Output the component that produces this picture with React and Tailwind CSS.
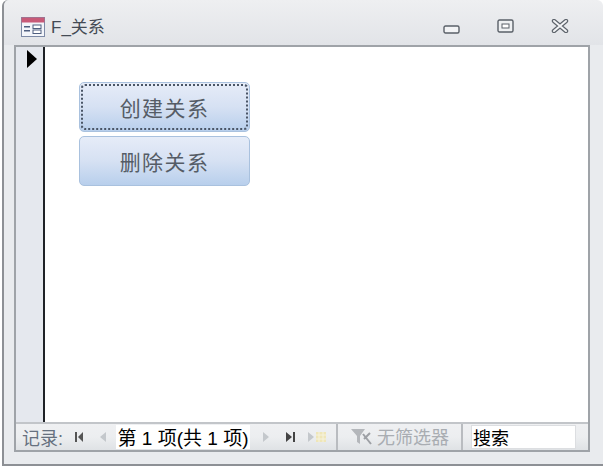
import React from "react";

const CJK = "font-['Liberation_Sans','Noto_Sans_CJK_SC',sans-serif]";

const Btn = ({ label, focused }) => (
  <div className="w-[171px] h-[50px] p-[1px] rounded-[5px] border border-[#a9c1de] bg-gradient-to-b from-[#e6ecf8] via-[#d6e1f3] to-[#b8cfec]">
    <div
      className={`h-full rounded-[4px] flex items-center justify-center pt-[3px] text-[21px] tracking-[1.4px] text-[#555c66] border-2 border-dotted ${
        focused ? "border-[#4a5566]" : "border-transparent"
      }`}
    >
      {label}
    </div>
  </div>
);

const First = () => (
  <svg width="11" height="10" viewBox="0 0 11 10" className="fill-[#555]">
    <rect x="1" y="0" width="2" height="10" />
    <path d="M9 0v10L4 5z" />
  </svg>
);
const Last = () => (
  <svg width="11" height="10" viewBox="0 0 11 10" className="fill-[#444]">
    <path d="M1 0v10l6-5z" />
    <rect x="8" y="0" width="2" height="10" />
  </svg>
);
const Tri = ({ left }) => (
  <svg width="8" height="10" viewBox="0 0 8 10" className="fill-[#c4c8cc]">
    <path d={left ? "M7 0v10L1 5z" : "M1 0v10l6-5z"} />
  </svg>
);

export default function App() {
  return (
    <div className={`w-[603px] h-[467px] bg-white flex flex-col overflow-hidden ${CJK}`}>
      <div className="w-[601px] h-[466px] ml-[2px] flex flex-col bg-[#e9ebee] border-l-2 border-b-2 border-[#8d9095] rounded-tl-[6px] rounded-tr-[8px]">
        {/* title bar */}
        <div className="h-[45px] shrink-0 flex items-center bg-gradient-to-b from-[#eeeff1] to-[#e2e4e8] pl-[17px] pt-[9px] rounded-t-[6px]">
          <svg width="24" height="20" viewBox="0 0 24 20">
            <rect x="0.5" y="0.5" width="23" height="19" fill="#f3f5fa" stroke="#7d8aa6" />
            <rect x="0.5" y="0.5" width="23" height="5" fill="#c85a78" />
            <rect x="3" y="9" width="6" height="1.5" fill="#4f5f80" />
            <rect x="3" y="13" width="6" height="1.5" fill="#4f5f80" />
            <rect x="12" y="8" width="8" height="3.5" fill="#fff" stroke="#4f5f80" />
            <rect x="12" y="13" width="8" height="3.5" fill="#fff" stroke="#4f5f80" />
          </svg>
          <span className="ml-[6px] text-[17px] leading-none text-[#444b55]">F_关系</span>
          <div className="ml-auto flex items-center">
            <svg width="17" height="9" viewBox="0 0 17 9" className="mt-[5px]">
              <rect x="1" y="1" width="15" height="7" rx="1.5" fill="#f2f3f5" stroke="#5a6068" strokeWidth="1.4" />
            </svg>
            <svg width="17" height="14" viewBox="0 0 17 14" className="ml-[37px] -mt-[3px]">
              <rect x="1" y="1" width="15" height="12" rx="1.5" fill="#eef0f2" stroke="#5a6068" strokeWidth="1.4" />
              <rect x="5" y="5" width="7" height="4" fill="#fff" stroke="#5a6068" />
            </svg>
            <svg width="18" height="14" viewBox="0 0 18 14" className="ml-[37px] mr-[34px] -mt-[3px]">
              <path d="M3 2l12 10M15 2L3 12" stroke="#5e646c" strokeWidth="4.4" strokeLinecap="round" />
              <path d="M3 2l12 10M15 2L3 12" stroke="#f2f3f5" strokeWidth="2" strokeLinecap="round" />
            </svg>
          </div>
        </div>

        {/* form frame */}
        <div className="flex-1 ml-[10px] mr-[13px] mb-[12px] flex flex-col border-2 border-[#9fa3a8] min-h-0">
          <div className="flex-1 flex min-h-0">
            <div className="w-[29px] shrink-0 bg-[#e5e8ee] border-r-2 border-[#1f2227] flex justify-center pt-[3px] pl-[6px]">
              <svg width="11" height="18" viewBox="0 0 11 18">
                <path d="M0 0l10 9L0 18z" fill="#000" />
              </svg>
            </div>
            <div className="flex-1 bg-white pt-[35px] pl-[34px] flex flex-col gap-[4px]">
              <Btn label="创建关系" focused />
              <Btn label="删除关系" />
            </div>
          </div>

          {/* record navigation */}
          <div className="h-[28px] shrink-0 flex items-center border-t-2 border-[#c2c5c9] bg-gradient-to-b from-[#eff0f2] via-[#eceef0] to-[#dfe2e5]">
            <span className="ml-[6px] pt-[3px] text-[18px] leading-none text-[#66717f]">记录:</span>
            <div className="ml-[11px]"><First /></div>
            <div className="ml-[14px]"><Tri left /></div>
            <div className="ml-[9px] w-[134px] h-[24px] pt-[3px] bg-white flex items-center justify-center text-[19px] leading-none whitespace-nowrap text-black">
              第 1 项(共 1 项)
            </div>
            <div className="ml-[12px]"><Tri /></div>
            <div className="ml-[15px]"><Last /></div>
            <div className="ml-[11px] flex items-center gap-[1px]">
              <Tri />
              <svg width="10" height="10" viewBox="0 0 10 10">
                <rect width="10" height="10" fill="#efe6b8" />
                <path d="M3 0v10M7 0v10M0 3h10M0 7h10" stroke="#f5f2df" strokeWidth="1" />
              </svg>
            </div>
            <div className="ml-[10px] h-full w-[2px] bg-[#b9bcc0]" />
            <div className="ml-[12px] flex items-center gap-[4px] text-[18px] leading-none text-[#a9adb2] whitespace-nowrap">
              <svg width="23" height="18" viewBox="0 0 23 18">
                <path d="M1 1h14l-5 7v8l-3-2V8z" fill="#b4b7bb" />
                <path d="M13 6l8 10M20 5l-6 6" stroke="#9da0a5" strokeWidth="2" fill="none" />
              </svg>
              <span className="pt-[2px]">无筛选器</span>
            </div>
            <div className="ml-[12px] h-full w-[2px] bg-[#b9bcc0]" />
            <div className="ml-[8px] w-[105px] h-[24px] pt-[3px] bg-white border border-[#dcdee1] flex items-center pl-[1px] text-[18px] leading-none text-black">
              搜索
            </div>
          </div>
        </div>
      </div>
    </div>
  );
}
